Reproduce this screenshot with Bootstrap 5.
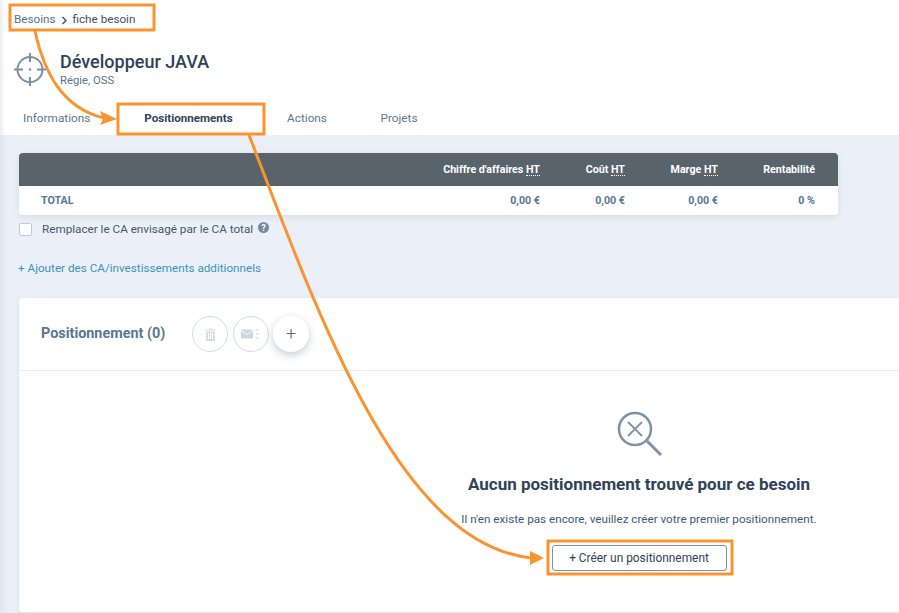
<!DOCTYPE html>
<html lang="fr">
<head>
<meta charset="utf-8">
<title>Fiche besoin</title>
<link href="https://cdn.jsdelivr.net/npm/bootstrap@5.3.0/dist/css/bootstrap.min.css" rel="stylesheet">
<style>
html,body{height:613px;overflow:hidden}
body{font-family:Roboto,"Liberation Sans",sans-serif;background:#ebf0f8;color:#2f4358;font-size:12px;position:relative;box-shadow:inset 7px 0 6px -4px #dfe4ec}
.topzone{background:#fff;height:135px;padding:12px 0 0 14px;box-shadow:inset 6px 0 5px -4px #e6e9ef}
.crumbs{font-size:11.7px;line-height:15px;gap:5px;color:#3e5266}
.crumbs a{color:#56718c;text-decoration:none}
.crumbs svg{margin:1px 0 0 0}
.titlezone{margin-top:22px;gap:14px;height:40px}
.titlezone h1{font-size:18px;font-weight:500;line-height:22px;margin:0;color:#2f4358}
.titlezone p{font-size:11.3px;line-height:12px;margin:2px 0 0;color:#5d7389}
.tabrow{margin-top:15px;margin-left:9px;height:30px}
.tabrow a{font-size:11.8px;line-height:28px;color:#5b7690;text-decoration:none;text-align:center;display:block}
.tabrow a.on{color:#2f4358;font-weight:700;font-size:11.6px}
.tabrow a.tab1{width:94px;text-align:left}
.tab2{width:143px}
.tab3{width:94px}
.tab4{width:90px}
.sumtable{margin:18px 0 0 19px;width:819px;background:#fff;border-radius:4px;overflow:hidden;box-shadow:0 2px 6px rgba(90,110,140,.15);font-size:10.7px}
.sumhead{background:#59636b;color:#fff;height:33px;font-weight:700;padding-top:1px}
.sumbody{height:29px;color:#5a7690;font-weight:700;padding-top:2px}
.sumhead,.sumbody{display:flex;align-items:center}
.c0{flex:1;padding-left:22px}
.c1{width:104px;text-align:right}
.c2{width:85px;text-align:right}
.c3{width:93px;text-align:right}
.c4{width:97px;text-align:right}
.cpad{width:23px}
.dots{border-bottom:1px dotted #fff;line-height:11px;display:inline-block}
.checkrow{margin:7px 0 0 19px;gap:10px;font-size:11.7px;color:#45596d;height:14px;padding-top:1px}
.boxmock{width:13px;height:13px;border:1px solid #bccbdb;border-radius:2px;background:#fff;flex:none}
.helpmark{margin:-4px 0 0 -5px}
.addlink{display:block;margin:25px 0 0 18px;font-size:11.7px;line-height:15px;color:#3b93b3;text-decoration:none}
.maincard{margin:22px 0 0 19px;background:#fff;border-radius:4px 0 0 4px;height:314px;box-shadow:0 1px 4px rgba(90,110,140,.12)}
.cardtop{height:73px;border-bottom:1px solid #e9eef6;padding-left:22px}
.cardtop h2{font-size:14.4px;font-weight:700;color:#5a7690;margin:0 26px 0 0;line-height:18px;width:125px;white-space:nowrap}
.circ{width:36px;height:36px;border-radius:50%;border:1px solid #cfdcea;background:#fff;margin-right:5px;padding:0;flex:none}
.circ.up{border:0;box-shadow:0 3px 8px rgba(70,80,100,.3);margin-left:-1px;color:#4f6a85;font-size:18px;font-weight:300;line-height:34px}
.emptyzone{padding-top:40px;padding-left:360px;width:880px}
.emptyzone h3{font-size:17px;font-weight:700;line-height:20px;margin:17px 0 0;color:#2f4358;white-space:nowrap}
.emptyzone p{font-size:11.7px;line-height:14px;margin:18px 0 0;color:#45596d;white-space:nowrap}
.btncreate{font-size:11.9px;line-height:14px;height:26px;width:175px;padding:0;margin-top:19px;border:1px solid #7e93a9;border-radius:3px;color:#2f4358;background:#fff}
.btncreate:hover{background:#fff;color:#2f4358}
.notes{position:absolute;left:0;top:0;pointer-events:none}
</style>
</head>
<body>
<div class="topzone">
  <div class="crumbs d-flex align-items-center">
    <a href="#">Besoins</a>
    <svg width="7" height="9" viewBox="0 0 7 9"><path d="M1.500 1 5 4.500 1.500 8" fill="none" stroke="#3d5266" stroke-width="1.400"/></svg>
    <span>fiche besoin</span>
  </div>
  <div class="titlezone d-flex align-items-center">
    <svg width="32" height="33" viewBox="0 0 32 33"><g fill="none" stroke="#7c90a5" stroke-width="2"><circle cx="16" cy="16.500" r="12.500"/><path d="M16 0v9M16 24v9M0 16.500h9M23 16.500h9"/></g><circle cx="16" cy="16.500" r="1.300" fill="#7c90a5"/></svg>
    <div><h1>Développeur JAVA</h1><p>Régie, OSS</p></div>
  </div>
  <nav class="tabrow d-flex">
    <a class="tab1" href="#">Informations</a>
    <a class="tab2 on" href="#">Positionnements</a>
    <a class="tab3" href="#">Actions</a>
    <a class="tab4" href="#">Projets</a>
  </nav>
</div>

<div class="sumtable">
  <div class="sumhead">
    <div class="c0"></div>
    <div class="c1">Chiffre d'affaires <span class="dots">HT</span></div>
    <div class="c2">Coût <span class="dots">HT</span></div>
    <div class="c3">Marge <span class="dots">HT</span></div>
    <div class="c4">Rentabilité</div>
    <div class="cpad"></div>
  </div>
  <div class="sumbody">
    <div class="c0">TOTAL</div>
    <div class="c1">0,00 €</div>
    <div class="c2">0,00 €</div>
    <div class="c3">0,00 €</div>
    <div class="c4">0 %</div>
    <div class="cpad"></div>
  </div>
</div>

<div class="checkrow d-flex align-items-center">
  <span class="boxmock"></span>
  <span>Remplacer le CA envisagé par le CA total</span>
  <svg class="helpmark" width="11" height="11" viewBox="0 0 11 11"><circle cx="5.500" cy="5.500" r="5.500" fill="#748a9f"/><text x="5.500" y="8.500" text-anchor="middle" font-size="8.500" font-weight="700" fill="#fff" font-family="Roboto">?</text></svg>
</div>

<a class="addlink" href="#">+ Ajouter des CA/investissements additionnels</a>

<div class="maincard">
  <div class="cardtop d-flex align-items-center">
    <h2>Positionnement (0)</h2>
    <button class="circ d-flex align-items-center justify-content-center" type="button" aria-label="Supprimer">
      <svg width="11" height="13" viewBox="0 0 11 13"><path d="M3.500 1.500V.6h4v.9H11v1H0v-1zM1 3.500h9V13H1zM3 5v6h1V5zM5 5v6h1V5zM7 5v6h1V5z" fill="#d5dfea" fill-rule="evenodd"/></svg>
    </button>
    <button class="circ d-flex align-items-center justify-content-center" type="button" aria-label="Envoyer">
      <svg width="26" height="14" viewBox="0 0 26 14"><rect x="3" y="2.500" width="12" height="9" rx="1" fill="#cad7e5"/><path d="M3 3.500l6 4 6-4" fill="none" stroke="#fff"/><path d="M17.500 4l3-2M18 7h3.500M17.500 10l3 2" stroke="#cad7e5" fill="none"/></svg>
    </button>
    <button class="circ up" type="button">+</button>
  </div>
  <div class="emptyzone text-center">
    <svg width="46" height="46" viewBox="-1 0 46 46"><g fill="none" stroke="#7d92a6"><circle cx="18" cy="18" r="16" stroke-width="2.500"/><path d="M11 11l14 14M25 11 11 25" stroke-width="1.800"/><path d="M30 30l14 14" stroke-width="3"/></g></svg>
    <h3>Aucun positionnement trouvé pour ce besoin</h3>
    <p>Il n'en existe pas encore, veuillez créer votre premier positionnement.</p>
    <button class="btn btncreate" type="button">+ Créer un positionnement</button>
  </div>
</div>

<svg class="notes" width="899" height="613" viewBox="0 0 899 613">
  <g fill="none" stroke="#fb9430" stroke-width="3">
    <rect x="10" y="5" width="144" height="25"/>
    <rect x="118" y="104" width="146" height="30"/>
    <rect x="548" y="541" width="184" height="33"/>
    <path d="M35 31C44 72 62 108 104 118"/>
    <path d="M249 135C320 320 400 545 532 558"/>
  </g>
  <path d="M117 119 100 111 103 119 100 125z" fill="#fb9430"/>
  <path d="M544 558 530 551 530 565z" fill="#fb9430"/>
</svg>
</body>
</html>
